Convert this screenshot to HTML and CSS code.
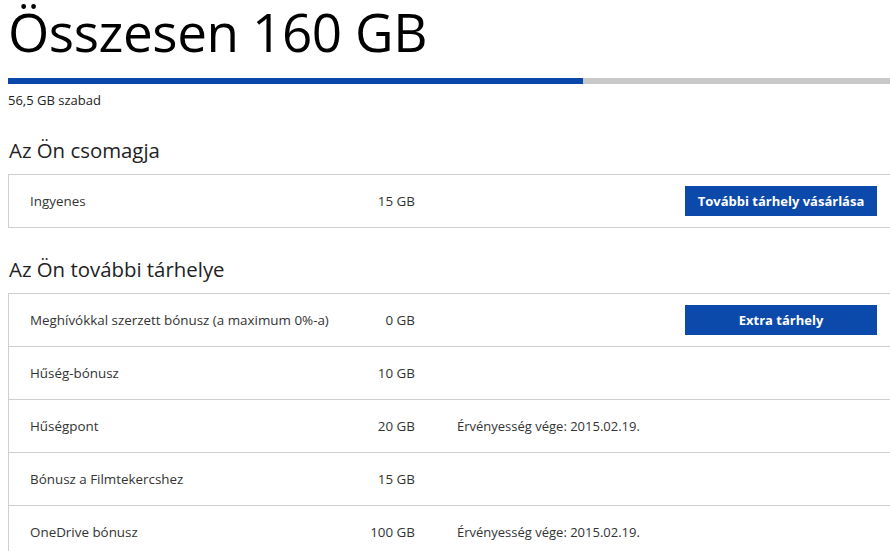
FILE: index.html
```html
<!DOCTYPE html>
<html lang="hu">
<head>
<meta charset="utf-8">
<link rel="stylesheet" href="styles.css">
</head>
<body>
<div class="page">
  <h1 class="total">Összesen 160 GB</h1>
  <div class="meter"><div class="meter-fill" style="width:575px"></div></div>
  <div class="free">56,5 GB szabad</div>

  <h2 class="section-title">Az Ön csomagja</h2>
  <div class="table">
    <div class="row">
      <div class="label">Ingyenes</div>
      <div class="value">15 GB</div>
      <div class="note"></div>
      <div class="action"><button class="btn">További tárhely vásárlása</button></div>
    </div>
  </div>

  <h2 class="section-title second">Az Ön további tárhelye</h2>
  <div class="table">
    <div class="row">
      <div class="label">Meghívókkal szerzett bónusz (a maximum 0%-a)</div>
      <div class="value">0 GB</div>
      <div class="note"></div>
      <div class="action"><button class="btn">Extra tárhely</button></div>
    </div>
    <div class="row">
      <div class="label">Hűség-bónusz</div>
      <div class="value">10 GB</div>
      <div class="note"></div>
      <div class="action"></div>
    </div>
    <div class="row">
      <div class="label">Hűségpont</div>
      <div class="value">20 GB</div>
      <div class="note">Érvényesség vége: 2015.02.19.</div>
      <div class="action"></div>
    </div>
    <div class="row">
      <div class="label">Bónusz a Filmtekercshez</div>
      <div class="value">15 GB</div>
      <div class="note"></div>
      <div class="action"></div>
    </div>
    <div class="row">
      <div class="label">OneDrive bónusz</div>
      <div class="value">100 GB</div>
      <div class="note">Érvényesség vége: 2015.02.19.</div>
      <div class="action"></div>
    </div>
  </div>
</div>
</body>
</html>
```
FILE: styles.css
```css
html, body {
  margin: 0;
  padding: 0;
  background: #fff;
  overflow: hidden;
}
body {
  font-family: "Open Sans", "Noto Sans", sans-serif;
  color: #222;
}
.page {
  padding: 0 0 0 8px;
}
.total {
  margin: 0;
  padding-top: 2px;
  font-weight: 400;
  font-size: 53px;
  line-height: 60px;
  color: #000;
  letter-spacing: -0.4px;
}
.meter {
  margin-top: 16px;
  height: 6px;
  background: #c8c8c8;
}
.meter-fill {
  height: 100%;
  background: #0b47a8;
}
.free {
  margin-top: 8px;
  font-size: 13px;
  line-height: 16px;
  color: #222;
}
.section-title {
  margin: 0;
  font-weight: 400;
  font-size: 20.4px;
  line-height: 28px;
  color: #222;
  padding-left: 1px;
  margin-top: 28px;
  margin-bottom: 10px;
}
.section-title.second {
  margin-top: 27px;
}
.table {
  border-top: 1px solid #cfcfcf;
  border-left: 1px solid #cfcfcf;
}
.row {
  display: grid;
  grid-template-columns: 320px 65px 270px 192px;
  align-items: center;
  height: 52px;
  padding-left: 21px;
  border-bottom: 1px solid #cfcfcf;
  font-size: 13.4px;
  color: #333;
}
.value {
  text-align: right;
}
.note {
  padding-left: 42px;
  white-space: nowrap;
  font-size: 13px;
}
.action {
  display: flex;
}
.btn {
  width: 192px;
  height: 30px;
  border: none;
  background: #0b4aaa;
  color: #fff;
  font-family: "Open Sans", "Noto Sans", sans-serif;
  font-weight: 700;
  font-size: 13px;
  padding: 0;
  margin: 0;
}
```
